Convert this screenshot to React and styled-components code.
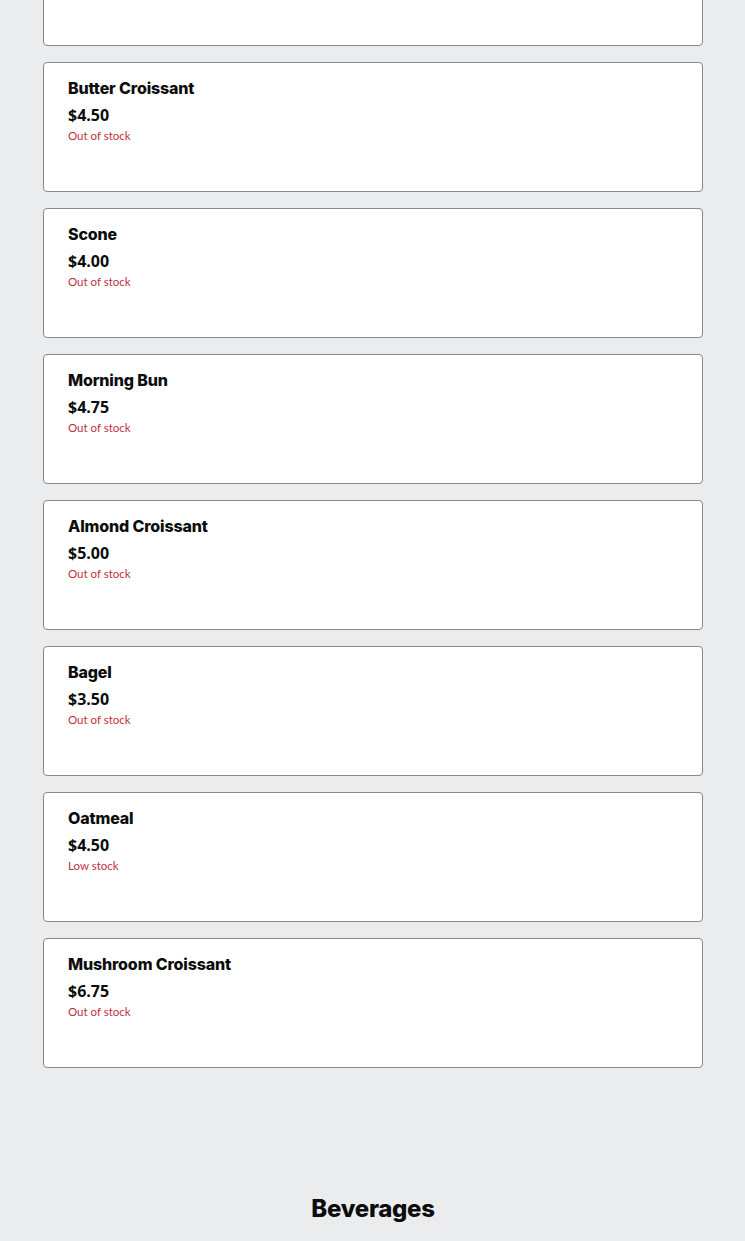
import React, { useLayoutEffect, useRef } from 'react'
import styled, { createGlobalStyle } from 'styled-components'

const GlobalStyle = createGlobalStyle`
    html, body {
        margin: 0;
        padding: 0;
        background: #ebecee;
    }
    body {
        font-family: Inter, "Noto Sans", sans-serif;
        color: #0d0d0d;
    }
`

const Menu = styled.main`
    display: flex;
    flex-direction: column;
    padding: 0 42px 0 43px;
`

const Section = styled.section`
    display: flex;
    flex-direction: column;
    padding-bottom: 125px;
`

const SectionTitle = styled.h2`
    margin: 0 0 24px;
    text-align: center;
    font-family: Inter, sans-serif;
    font-size: 24px;
    line-height: 32px;
    font-weight: 800;
    letter-spacing: -0.3px;
    color: #0d0d0d;
`

const List = styled.div`
    display: flex;
    flex-direction: column;
    gap: 16px;
`

const Card = styled.div`
    box-sizing: border-box;
    height: 130px;
    padding: 13px 24px;
    background: #fff;
    border: 1px solid #888;
    border-radius: 4px;
    display: flex;
    flex-direction: column;
`

const Name = styled.h3`
    margin: 0;
    font-family: Inter, sans-serif;
    font-size: 16px;
    line-height: 24px;
    font-weight: 800;
    letter-spacing: -0.15px;
    color: #0d0d0d;
`

const Price = styled.div`
    margin-top: 5px;
    font-family: "Open Sans", sans-serif;
    font-size: 16px;
    line-height: 20px;
    font-weight: 700;
    color: #0d0d0d;
`

const Stock = styled.div`
    margin-top: 3px;
    font-family: Lato, "Noto Sans", sans-serif;
    font-size: 11.5px;
    line-height: 16px;
    color: ${p => (p.$low ? '#c0303c' : '#c0303c')};
`

const pastries = [
    { name: 'Cinnamon Roll', price: 4.25, stock: 'Out of stock' },
    { name: 'Blueberry Muffin', price: 3.75, stock: 'Out of stock' },
    { name: 'Butter Croissant', price: 4.5, stock: 'Out of stock' },
    { name: 'Scone', price: 4.0, stock: 'Out of stock' },
    { name: 'Morning Bun', price: 4.75, stock: 'Out of stock' },
    { name: 'Almond Croissant', price: 5.0, stock: 'Out of stock' },
    { name: 'Bagel', price: 3.5, stock: 'Out of stock' },
    { name: 'Oatmeal', price: 4.5, stock: 'Low stock' },
    { name: 'Mushroom Croissant', price: 6.75, stock: 'Out of stock' },
]

const beverages = [
    { name: 'Drip Coffee', price: 3.0, stock: 'In stock' },
    { name: 'Latte', price: 4.75, stock: 'In stock' },
    { name: 'Cappuccino', price: 4.5, stock: 'In stock' },
    { name: 'Cold Brew', price: 4.25, stock: 'Low stock' },
    { name: 'Chai Latte', price: 4.75, stock: 'In stock' },
    { name: 'Hot Chocolate', price: 4.0, stock: 'In stock' },
    { name: 'Matcha Latte', price: 5.25, stock: 'In stock' },
    { name: 'Orange Juice', price: 3.75, stock: 'In stock' },
]

function Item({ item, innerRef }) {
    return (
        <Card ref={innerRef}>
            <Name>{item.name}</Name>
            <Price>${item.price.toFixed(2)}</Price>
            <Stock $low={item.stock === 'Low stock'}>{item.stock}</Stock>
        </Card>
    )
}

export default function App() {
    const anchor = useRef(null)

    useLayoutEffect(() => {
        // keep the list where the croissants start
        if (anchor.current) {
            const top = anchor.current.getBoundingClientRect().top + window.scrollY
            window.scrollTo(0, top - 62)
        }
    }, [])

    return (
        <>
            <GlobalStyle />
            <Menu>
                <Section>
                    <SectionTitle style={{ marginTop: 64 }}>Pastries</SectionTitle>
                    <List>
                        {pastries.map(p => (
                            <Item
                                key={p.name}
                                item={p}
                                innerRef={p.name === 'Butter Croissant' ? anchor : undefined}
                            />
                        ))}
                    </List>
                </Section>
                <Section>
                    <SectionTitle>Beverages</SectionTitle>
                    <List>
                        {beverages.map(b => (
                            <Item key={b.name} item={b} />
                        ))}
                    </List>
                </Section>
            </Menu>
        </>
    )
}
